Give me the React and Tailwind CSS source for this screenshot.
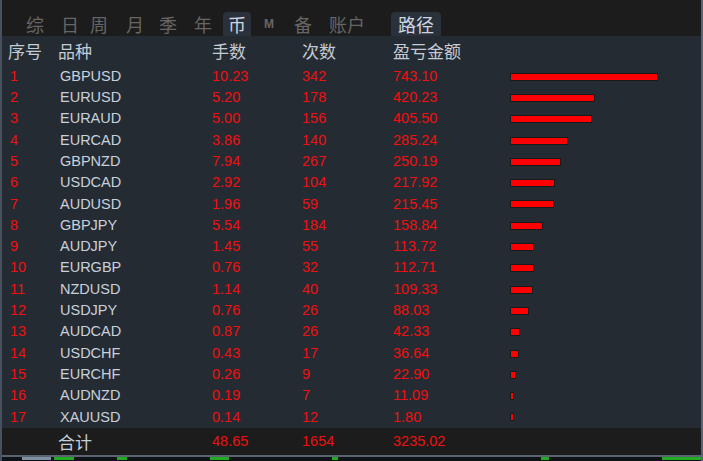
import React from 'react';

const rows = [
  ['GBPUSD', '10.23', '342', '743.10'],
  ['EURUSD', '5.20', '178', '420.23'],
  ['EURAUD', '5.00', '156', '405.50'],
  ['EURCAD', '3.86', '140', '285.24'],
  ['GBPNZD', '7.94', '267', '250.19'],
  ['USDCAD', '2.92', '104', '217.92'],
  ['AUDUSD', '1.96', '59', '215.45'],
  ['GBPJPY', '5.54', '184', '158.84'],
  ['AUDJPY', '1.45', '55', '113.72'],
  ['EURGBP', '0.76', '32', '112.71'],
  ['NZDUSD', '1.14', '40', '109.33'],
  ['USDJPY', '0.76', '26', '88.03'],
  ['AUDCAD', '0.87', '26', '42.33'],
  ['USDCHF', '0.43', '17', '36.64'],
  ['EURCHF', '0.26', '9', '22.90'],
  ['AUDNZD', '0.19', '7', '11.09'],
  ['XAUUSD', '0.14', '12', '1.80'],
];

const tabs = [
  { t: '综', ml: 'ml-[19px]', w: 'w-[28px]' },
  { t: '日', ml: 'ml-[7px]', w: 'w-[28px]' },
  { t: '周', ml: 'ml-[1px]', w: 'w-[28px]' },
  { t: '月', ml: 'ml-[8px]', w: 'w-[28px]' },
  { t: '季', ml: 'ml-[5px]', w: 'w-[28px]' },
  { t: '年', ml: 'ml-[7px]', w: 'w-[28px]' },
  { t: '币', ml: 'ml-[6px]', w: 'w-[28px]', on: true },
  { t: 'M', ml: 'ml-[4px]', w: 'w-[28px]', m: true },
  { t: '备', ml: 'ml-[6px]', w: 'w-[28px]' },
  { t: '账户', ml: 'ml-[10px]', w: 'w-[40px]' },
  { t: '路径', ml: 'ml-[24px]', w: 'w-[50px]', on: true },
];

const cjk = { fontFamily: '"Noto Sans CJK SC", "Noto Sans", sans-serif' };
const lat = { fontFamily: '"Liberation Sans", Arial, sans-serif' };

export default function App() {
  const max = 743.1;
  return (
    <div className="w-[703px] h-[461px] bg-[#1c1c1c] overflow-hidden flex flex-col border-l-2 border-[#46505e] border-r-2 border-r-[#5a6470]">
      {/* tabs */}
      <div className="h-[36px] flex items-end shrink-0" style={cjk}>
        {tabs.map((x, i) => (
          <div
            key={i}
            className={`${x.ml} ${x.w} h-[24px] flex items-center justify-center rounded-t-[4px] ${
              x.on ? 'bg-[#2a313a] text-[#cdd6e2]' : 'text-[#666666]'
            } ${x.m ? 'text-[12px] font-bold text-[#7a5560]' : 'text-[18px]'}`}
            style={x.m ? lat : undefined}
          >
            {x.t}
          </div>
        ))}
      </div>

      {/* table */}
      <div className="bg-[#252b33] flex flex-col shrink-0 h-[392px]">
        <div className="h-[30px] flex items-center text-[17px] text-[#c3cbd6]" style={cjk}>
          <span className="w-[56px] pl-[6px]">序号</span>
          <span className="w-[154px]">品种</span>
          <span className="w-[90px]">手数</span>
          <span className="w-[91px]">次数</span>
          <span>盈亏金额</span>
        </div>
        {rows.map((r, i) => (
          <div key={r[0]} className="h-[21.3px] flex items-center text-[14.5px]" style={lat}>
            <span className="w-[58px] pl-[8px] text-[#f01010]">{i + 1}</span>
            <span className="w-[152px] text-[#c8d0dc]">{r[0]}</span>
            <span className="w-[90px] text-[#f01010]">{r[1]}</span>
            <span className="w-[91px] text-[#f01010]">{r[2]}</span>
            <span className="w-[117px] text-[#f01010]">{r[3]}</span>
            <div
              className="h-[6px] bg-[#ff0000] border border-[#1a1a1a] box-content"
              style={{ width: Math.max(2, (parseFloat(r[3]) / max) * 146) + 'px' }}
            />
          </div>
        ))}
      </div>

      {/* total */}
      <div className="h-[27px] flex items-center shrink-0 text-[14.5px] text-[#f01010]" style={lat}>
        <span className="w-[56px]" />
        <span className="w-[154px] text-[17px] text-[#c8d0dc]" style={cjk}>合计</span>
        <span className="w-[90px]">48.65</span>
        <span className="w-[91px]">1654</span>
        <span>3235.02</span>
      </div>

      {/* bottom strip */}
      <div className="flex-1 border-t-2 border-[#5a6470] bg-[#0f1216] flex items-start pl-[20px] gap-[3px]">
        <span className="w-[30px] h-[3px] bg-[#8090a0]" />
        <span className="w-[20px] h-[3px] bg-[#22aa22]" />
        <span className="ml-[40px] w-[10px] h-[3px] bg-[#22aa22]" />
        <span className="ml-[80px] w-[20px] h-[3px] bg-[#22aa22]" />
        <span className="ml-[100px] w-[6px] h-[3px] bg-[#22aa22]" />
        <span className="ml-[200px] w-[8px] h-[3px] bg-[#22aa22]" />
        <span className="ml-[110px] w-[40px] h-[3px] bg-[#22aa22]" />
      </div>
    </div>
  );
}
